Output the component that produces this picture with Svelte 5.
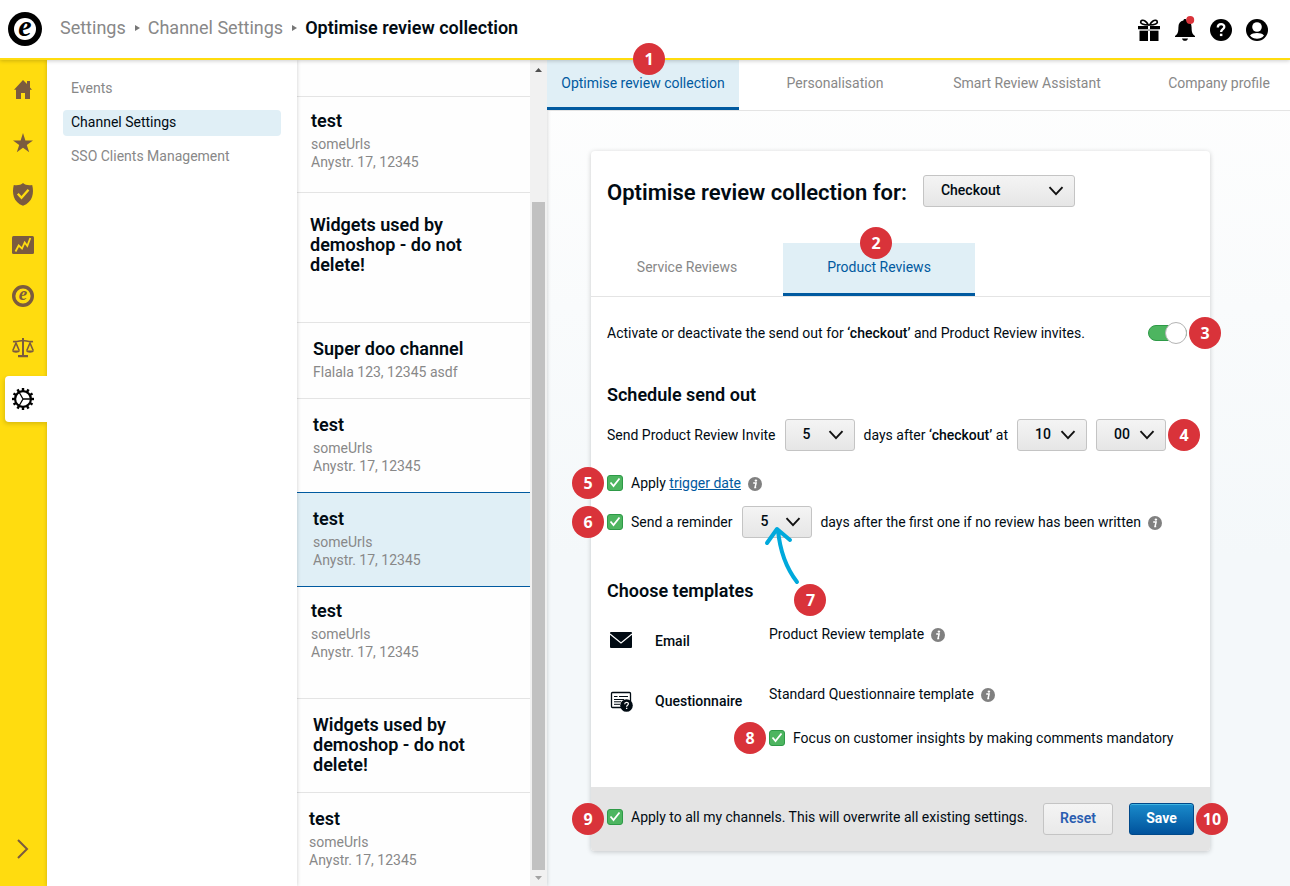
<script>
    const subNav = ['Events', 'Channel Settings', 'SSO Clients Management'];
    const tabs = ['Optimise review collection', 'Personalisation', 'Smart Review Assistant', 'Company profile'];
    const reviewTabs = ['Service Reviews', 'Product Reviews'];
    const channels = [
        { name: 'test', lines: ['someUrls', 'Anystr. 17, 12345'], layout: 'tight' },
        { name: 'Widgets used by demoshop - do not delete!', lines: [], layout: 'roomy' },
        { name: 'Super doo channel', lines: ['Flalala 123, 12345 asdf'], layout: '' },
        { name: 'test', lines: ['someUrls', 'Anystr. 17, 12345'], layout: '' },
        { name: 'test', lines: ['someUrls', 'Anystr. 17, 12345'], layout: '' },
        { name: 'test', lines: ['someUrls', 'Anystr. 17, 12345'], layout: 'tight tall' },
        { name: 'Widgets used by demoshop - do not delete!', lines: [], layout: '' },
        { name: 'test', lines: ['someUrls', 'Anystr. 17, 12345'], layout: 'last' },
    ];

    let activeNav = 1;
    let activeTab = 0;
    let activeReviewTab = 1;
    let activeChannel = 4;

    let event = 'Checkout';
    let sendOut = true;
    let inviteDays = '5';
    let hour = '10';
    let minute = '00';
    let triggerDate = true;
    let reminder = true;
    let reminderDays = '5';
    let mandatory = true;
    let allChannels = true;

    const teeth = [0, 30, 60, 90, 120, 150, 180, 210, 240, 270, 300, 330];
</script>

{#snippet chevron()}
    <svg class="chevron" viewBox="0 0 16 10" aria-hidden="true">
        <path d="M1.5 1.2 8 8.2l6.5-7" fill="none" stroke="#111" stroke-width="1.9" />
    </svg>
{/snippet}

{#snippet info()}
    <svg class="info" viewBox="0 0 14 14" role="img" aria-label="Info">
        <circle cx="7" cy="7" r="7" fill="#808080" />
        <circle cx="7.9" cy="3.6" r="1.2" fill="#fff" />
        <path d="M5.2 6.1h2.9L7 10.6h1.2" fill="none" stroke="#fff" stroke-width="1.5" />
    </svg>
{/snippet}

<div class="page">
    <header>
        <a class="logo" href="#home" aria-label="Home">
            <svg viewBox="0 0 34 34">
                <circle cx="17" cy="17" r="17" />
                <circle cx="17" cy="17" r="11" fill="#fff" />
                <text x="17" y="24" text-anchor="middle" font-size="30">e</text>
            </svg>
        </a>
        <nav class="breadcrumb">
            <a href="#settings">Settings</a>
            <svg viewBox="0 0 4 6"><path d="M0 0 5 3 0 6z" fill="#777" /></svg>
            <a href="#channels">Channel Settings</a>
            <svg viewBox="0 0 4 6"><path d="M0 0 5 3 0 6z" fill="#777" /></svg>
            <strong>Optimise review collection</strong>
        </nav>
        <div class="actions">
            <button aria-label="Gifts">
                <svg viewBox="0 0 22 22">
                    <path d="M0 7h10v3.2H0zM12 7h10v3.2H12zM1.5 12H10v10H1.500zM12 12h8.500v10H12z" />
                    <path d="M1.500 10.200h19V12h-19z" fill="#aaa" />
                    <path d="M10.300 6C7.500 5.800 3 5.500 2.700 3.300 2.500 1.300 5 .6 7 2c1.500 1 2.800 2.500 3.300 4zM11.700 6c2.800-.2 7.300-.5 7.600-2.700C19.500 1.300 17 .6 15 2c-1.500 1-2.800 2.500-3.300 4z" fill="none" stroke="#000" stroke-width="1.700" />
                </svg>
            </button>
            <button aria-label="Notifications">
                <svg viewBox="0 0 22 22">
                    <path d="M11 0c1 0 1.600.7 1.600 1.600 3.300.7 5 3.300 5 6.800 0 4.600.7 6.600 3.400 8.600v1H1v-1c2.700-2 3.400-4 3.400-8.600 0-3.500 1.700-6.100 5-6.800C9.400.7 10 0 11 0zM8 19.500h6c-.4 1.400-1.400 2.300-3 2.300s-2.600-.9-3-2.300z" />
                    <circle cx="16.200" cy="1" r="4" fill="#d9333a" />
                </svg>
            </button>
            <button aria-label="Help">
                <svg viewBox="0 0 22 22">
                    <circle cx="11" cy="11" r="11" />
                    <path d="M7.800 8.600c0-4.500 6.700-4.300 6.500-.6-.1 2.200-3.200 2.300-3.200 5.100" fill="none" stroke="#fff" stroke-width="2.300" />
                    <path d="M9.900 14.700h2.500v2.400H9.900z" fill="#fff" />
                </svg>
            </button>
            <button aria-label="Account">
                <svg viewBox="0 0 22 22">
                    <circle cx="11" cy="11" r="11" />
                    <circle cx="11" cy="8" r="4.800" fill="#fff" />
                    <path d="M4 16.500c1.500-2 4.200-2.600 7-2.600s5.500.6 7 2.600c-1.800 2.200-4.200 3.300-7 3.300s-5.200-1.100-7-3.300z" fill="#fff" />
                </svg>
            </button>
        </div>
    </header>

    <div class="columns">
        <nav class="rail" aria-label="Main">
            <a href="#home" aria-label="Home">
                <svg viewBox="0 0 24 24"><path d="M12 -1 3 8.700h2V18h5v-6h4v6h5V8.700h2l-2-2.300V0h-3v3z" /></svg>
            </a>
            <a href="#reviews" aria-label="Reviews">
                <svg viewBox="0 0 24 24"><path d="m12 1 2.400 7.400H22l-6.200 4.500 2.400 7.400-6.200-4.600-6.200 4.600 2.400-7.400L2 8.400h7.600z" /></svg>
            </a>
            <a href="#protection" aria-label="Protection">
                <svg viewBox="0 0 24 24">
                    <path d="M12 0c2 2.100 6 2.600 9.200 2 2 8 .7 17-9.200 20.800C2.100 19 .8 10 2.800 2 6 2.600 10 2.100 12 0z" />
                    <path d="m6.800 10.800 3.700 4 7-8" fill="none" stroke="#ffdc0f" stroke-width="2.400" />
                </svg>
            </a>
            <a href="#insights" aria-label="Insights">
                <svg viewBox="0 0 24 24">
                    <rect x="1" y="2" width="22" height="18" rx="1.500" />
                    <path d="m4.500 17.500 3.200-6 3.300 3 2.700-6 2.600 3.500 3-8" fill="none" stroke="#ffdc0f" stroke-width="1.800" />
                </svg>
            </a>
            <a href="#trustmark" aria-label="Trustmark">
                <svg viewBox="0 0 24 24">
                    <circle cx="12" cy="11" r="9.300" fill="none" stroke="#7b5b3f" stroke-width="3.400" />
                    <text x="12" y="15" text-anchor="middle" font-size="19">e</text>
                </svg>
            </a>
            <a href="#legal" aria-label="Legal">
                <svg viewBox="0 0 24 24">
                    <path d="M11 2h2v17h4v2.300H7V19h4zM1 14.500h8c-.3 3-7.700 3-8 0zM15 14.500h8c-.3 3-7.700 3-8 0z" />
                    <path d="M2 5.500c4 .8 7-1 10-1s6 1.800 10 1M1.800 14.500 5 7l3.200 7.500M15.800 14.500 19 7l3.200 7.500" fill="none" stroke="#7b5b3f" stroke-width="1.600" />
                </svg>
            </a>
            <a class="active" href="#settings" aria-label="Settings">
                <svg viewBox="0 0 24 24">
                    {#each teeth as angle}
                        <path d="M10.800 1h2.400v3h-2.400z" transform="rotate({angle} 12 12)" />
                    {/each}
                    <circle cx="12" cy="12" r="7.900" fill="none" stroke="#000" stroke-width="2.200" />
                    <path d="M12 12h8M12 12 8 5M12 12l-4 7" fill="none" stroke="#000" stroke-width="1.300" />
                </svg>
            </a>
            <button class="expand" aria-label="Expand menu">
                <svg viewBox="0 0 24 24"><path d="m7 3 9 9-9 9" fill="none" stroke="#7b5b3f" stroke-width="2" /></svg>
            </button>
        </nav>

        <nav class="subnav" aria-label="Settings">
            {#each subNav as item, i}
                <a href="#settings" class:active={i === activeNav} on:click={() => (activeNav = i)}>{item}</a>
            {/each}
        </nav>

        <div class="channels">
            <ul>
                <li class="stub"></li>
                {#each channels as channel, i}
                    <li class={channel.layout} class:selected={i === activeChannel}>
                        <button on:click={() => (activeChannel = i)}>
                            <strong>{channel.name}</strong>
                            {#each channel.lines as line}
                                <span>{line}</span>
                            {/each}
                        </button>
                    </li>
                {/each}
            </ul>
            <div class="scrollbar" aria-hidden="true">
                <svg viewBox="0 0 7 4"><path d="M0 4h7L3.500 0z" fill="#505050" /></svg>
                <div class="thumb"></div>
                <svg viewBox="0 0 7 4"><path d="M0 0h7L3.500 4z" fill="#a3a3a3" /></svg>
            </div>
        </div>

        <main>
            <div class="anchor">
                <div class="tabs">
                    {#each tabs as tab, i}
                        <button class:active={i === activeTab} on:click={() => (activeTab = i)}>{tab}</button>
                    {/each}
                </div>
                <span class="badge on-tab">1</span>
            </div>

            <section class="card">
                <div class="title">
                    <h1><label for="event">Optimise review collection for:</label></h1>
                    <div class="select wide">
                        <select id="event" bind:value={event}>
                            <option>Checkout</option>
                        </select>
                        {@render chevron()}
                    </div>
                </div>

                <div class="review-tabs">
                    {#each reviewTabs as tab, i}
                        <button class:active={i === activeReviewTab} on:click={() => (activeReviewTab = i)}>
                            {tab}
                            {#if i === 1}<span class="badge on-top">2</span>{/if}
                        </button>
                    {/each}
                </div>

                <div class="content">
                    <div class="row activate">
                        <label for="send-out">Activate or deactivate the send out for <b>‘checkout’</b> and Product Review invites.</label>
                        <div class="anchor">
                            <input id="send-out" class="toggle" type="checkbox" bind:checked={sendOut} />
                            <span class="badge after">3</span>
                        </div>
                    </div>

                    <h2>Schedule send out</h2>
                    <div class="row schedule">
                        <label for="days">Send Product Review Invite</label>
                        <div class="select">
                            <select id="days" bind:value={inviteDays}><option>5</option></select>
                            {@render chevron()}
                        </div>
                        <label for="hour">days after <b>‘checkout’</b> at</label>
                        <div class="select">
                            <select id="hour" bind:value={hour}><option>10</option></select>
                            {@render chevron()}
                        </div>
                        <div class="select">
                            <select aria-label="Minute" bind:value={minute}><option>00</option></select>
                            {@render chevron()}
                            <span class="badge after">4</span>
                        </div>
                    </div>

                    <div class="row check trigger">
                        <span class="badge before">5</span>
                        <input id="trigger" class="box" type="checkbox" bind:checked={triggerDate} />
                        <label for="trigger">Apply <a href="#trigger-date">trigger date</a></label>
                        {@render info()}
                    </div>

                    <div class="row check reminder">
                        <span class="badge before">6</span>
                        <input id="reminder" class="box" type="checkbox" bind:checked={reminder} />
                        <label for="reminder">Send a reminder</label>
                        <div class="select">
                            <select id="reminder-days" bind:value={reminderDays}><option>5</option></select>
                            {@render chevron()}
                            <svg class="arrow" viewBox="0 0 40 64" aria-hidden="true">
                                <path d="M35 58C25 45 18 28 16 6M5 19 15 5l13 11" />
                            </svg>
                            <span class="badge below">7</span>
                        </div>
                        <label for="reminder-days">days after the first one if no review has been written</label>
                        {@render info()}
                    </div>

                    <h2>Choose templates</h2>
                    <dl>
                        <dt>
                            <svg viewBox="0 0 24 24">
                                <rect x="1" y="3" width="22" height="16" rx="1" fill="#010b13" />
                                <path d="m1 5 11 9 11-9" fill="none" stroke="#fff" stroke-width="1.200" />
                            </svg>
                            Email
                        </dt>
                        <dd>
                            <div class="row">Product Review template {@render info()}</div>
                        </dd>
                        <dt>
                            <svg viewBox="0 0 24 24">
                                <rect x="2.500" y="3.500" width="19" height="15" rx="1" fill="none" stroke="#010b13" stroke-width="1.300" />
                                <path d="M5 7.500h3.500M10 7.500h9M5 10.500h10M5 12.800h7M5 15.300h6" stroke="#010b13" stroke-width="1" />
                                <circle cx="17.500" cy="16.500" r="6.300" fill="#010b13" />
                                <path d="M15.700 15.300c0-2.600 3.800-2.500 3.700-.3-.1 1.200-1.800 1.300-1.800 2.800" fill="none" stroke="#fff" stroke-width="1.200" />
                                <path d="M17 18.700h1.300V20H17z" fill="#fff" />
                            </svg>
                            Questionnaire
                        </dt>
                        <dd>
                            <div class="row">Standard Questionnaire template {@render info()}</div>
                            <div class="row check mandatory">
                                <span class="badge before">8</span>
                                <input id="mandatory" class="box" type="checkbox" bind:checked={mandatory} />
                                <label for="mandatory">Focus on customer insights by making comments mandatory</label>
                            </div>
                        </dd>
                    </dl>
                </div>

                <footer>
                    <div class="row check">
                        <span class="badge before">9</span>
                        <input id="all" class="box" type="checkbox" bind:checked={allChannels} />
                        <label for="all">Apply to all my channels. This will overwrite all existing settings.</label>
                    </div>
                    <button class="reset">Reset</button>
                    <div class="anchor">
                        <button class="save">Save</button>
                        <span class="badge after">10</span>
                    </div>
                </footer>
            </section>
        </main>
    </div>
</div>

<style>
    :global(body) {
        margin: 0;
        font-family: Roboto, sans-serif;
        font-size: 14px;
        line-height: 20px;
        color: #010b13;
    }
    .page,
    .page :global(*) {
        box-sizing: border-box;
    }
    .page {
        display: flex;
        flex-direction: column;
        min-height: 100vh;
    }
    svg {
        display: block;
        flex: none;
        overflow: visible;
    }
    text {
        font-family: "Liberation Serif", serif;
        font-style: italic;
        font-weight: bold;
    }
    button {
        border: 0;
        padding: 0;
        background: none;
        color: inherit;
        font: inherit;
        cursor: pointer;
    }
    a {
        color: inherit;
        text-decoration: none;
    }
    ul,
    dl,
    dd,
    h1,
    h2 {
        margin: 0;
        padding: 0;
    }
    b,
    strong {
        font-weight: 500;
    }

    header {
        position: relative;
        z-index: 3;
        display: flex;
        align-items: center;
        height: 60px;
        padding: 0 22px 0 8px;
        background: #fff;
        border-bottom: 2px solid #ffdc0f;
        box-shadow: 0 1px 4px rgba(0, 0, 0, 0.2);
    }
    .logo svg {
        width: 34px;
        height: 34px;
    }
    .breadcrumb {
        display: flex;
        align-items: center;
        gap: 9px;
        margin-left: 18px;
        padding-bottom: 2px;
        font-size: 18px;
        color: #888;
    }
    .breadcrumb svg {
        width: 4px;
        height: 6px;
    }
    .breadcrumb strong {
        font-weight: 600;
        color: #010b13;
    }
    .actions {
        display: flex;
        gap: 14px;
        margin-left: auto;
        padding-top: 2px;
    }
    .actions svg {
        width: 22px;
        height: 22px;
    }

    .columns {
        flex: 1;
        display: grid;
        grid-template-columns: 47px 250px 250px minmax(0, 1fr);
    }
    .rail {
        display: flex;
        flex-direction: column;
        gap: 5px;
        padding: 10px 0 14px 5px;
        background: #ffdc0f;
        fill: #7b5b3f;
    }
    .rail a,
    .rail button {
        display: flex;
        align-items: center;
        height: 46px;
        padding-left: 6px;
    }
    .rail svg {
        width: 24px;
        height: 24px;
    }
    .rail .active {
        position: relative;
        z-index: 2;
        background: #fff;
        border-radius: 4px 0 0 4px;
        box-shadow: -1px 2px 4px rgba(0, 0, 0, 0.15);
        clip-path: inset(-6px 0 -6px -6px);
        fill: #000;
    }
    .rail .expand {
        margin-top: auto;
    }

    .subnav {
        position: relative;
        z-index: 1;
        display: flex;
        flex-direction: column;
        gap: 8px;
        padding: 16px;
        background: #fff;
        box-shadow: 0 0 4px rgba(0, 0, 0, 0.2);
        color: #888;
    }
    .subnav a {
        padding: 2px 8px 4px;
        border-radius: 4px;
    }
    .subnav .active {
        background: #e0eff6;
        color: #010b13;
    }

    .channels {
        position: relative;
        display: flex;
        background: #fefefe;
        box-shadow: 0 0 4px rgba(0, 0, 0, 0.2);
    }
    ul {
        flex: 1;
        list-style: none;
    }
    li {
        padding: 16px 48px 17px 16px;
        border-bottom: 1px solid #e4e4e4;
    }
    li.stub {
        height: 37px;
        padding: 0;
    }
    li.tight {
        min-height: 96px;
        padding: 14px 48px 0 14px;
    }
    li.tall {
        min-height: 112px;
    }
    li.roomy {
        min-height: 130px;
        padding: 22px 48px 0 13px;
    }
    li.last {
        padding: 16px 48px 0 12px;
        border: 0;
    }
    li.selected {
        position: relative;
        margin-top: -1px;
        background: #e0eff6;
        border-top: 1px solid #005aa0;
        border-bottom-color: #005aa0;
    }
    li button {
        display: block;
        text-align: left;
    }
    li strong {
        display: block;
        font-size: 18px;
        font-weight: 600;
    }
    li span {
        display: block;
        line-height: 18px;
        color: #888;
    }
    li strong + span {
        margin-top: 4px;
    }
    .scrollbar {
        display: flex;
        flex-direction: column;
        align-items: center;
        width: 17px;
        padding: 8px 0 6px;
        background: #f1f1f1;
    }
    .scrollbar svg {
        width: 7px;
        height: 4px;
    }
    .thumb {
        flex: 1;
        width: 13px;
        margin: 130px 0 6px;
        background: #c1c1c1;
    }

    main {
        background: linear-gradient(#fefefe, #f4f8fa 60%);
    }
    .tabs {
        flex: 1;
        display: flex;
        min-width: 0;
        background: #fff;
        border-bottom: 1px solid #e4e4e4;
        overflow: hidden;
    }
    .tabs button,
    .review-tabs button {
        flex: none;
        width: 192px;
        height: 50px;
        padding-bottom: 2px;
        border-bottom: 3px solid transparent;
        color: #888;
    }
    .tabs button.active,
    .review-tabs button.active {
        background: #e0eff6;
        border-color: #005aa0;
        color: #005aa0;
    }

    .card {
        margin: 40px 80px 34px 44px;
        background: #fff;
        border-radius: 4px;
        box-shadow: 0 1px 5px rgba(0, 0, 0, 0.2);
    }
    .title {
        display: flex;
        align-items: center;
        gap: 16px;
        padding: 24px 16px 36px;
    }
    h1 {
        padding-top: 3px;
        font-size: 22px;
        line-height: 28px;
        font-weight: 600;
    }
    h2 {
        font-size: 18px;
        line-height: 24px;
        font-weight: 600;
    }
    .review-tabs {
        display: flex;
        border-bottom: 1px solid #e4e4e4;
    }
    .review-tabs button {
        position: relative;
        height: 53px;
    }
    .content {
        padding: 26px 23px 39px 16px;
    }
    .row {
        position: relative;
        display: flex;
        align-items: center;
    }
    .activate {
        justify-content: space-between;
        margin-bottom: 40px;
    }
    .anchor {
        position: relative;
        display: flex;
    }
    .schedule {
        gap: 9px;
        margin: 12px 0 22px;
    }
    .check .box {
        margin-right: 8px;
    }
    .reminder {
        margin: 13px 0 41px;
    }
    .reminder .select {
        margin: 0 8px 0 10px;
    }
    .row a {
        color: #005aa0;
        text-decoration: underline;
    }
    .info {
        width: 14px;
        height: 14px;
        margin: 2px 0 0 7px;
    }

    .select {
        position: relative;
        width: 70px;
    }
    .select.wide {
        width: 152px;
    }
    select {
        appearance: none;
        display: block;
        width: 100%;
        height: 32px;
        margin: 0;
        padding: 0 28px 2px 17px;
        border: 1px solid #c4c4c4;
        border-radius: 3px;
        background: linear-gradient(#f4f4f4, #e6e6e6);
        color: #010b13;
        font: 500 14px/20px Roboto, sans-serif;
    }
    .chevron {
        position: absolute;
        top: 11px;
        right: 11px;
        width: 16px;
        height: 10px;
        pointer-events: none;
    }
    .arrow {
        position: absolute;
        top: 18px;
        left: 20px;
        width: 40px;
        height: 64px;
        fill: none;
        stroke: #00a9dc;
        stroke-width: 4px;
        stroke-linecap: round;
        stroke-linejoin: round;
        pointer-events: none;
    }

    .box {
        appearance: none;
        flex: none;
        width: 16px;
        height: 16px;
        margin: 0;
        border: 1px solid #2e9a47;
        border-radius: 3px;
        background: #fff;
    }
    .box:checked {
        background: #4db560 url("data:image/svg+xml,%3Csvg xmlns='http://www.w3.org/2000/svg' viewBox='0 0 14 14'%3E%3Cpath d='M2.500 6.500l3 3.500 6-7.500' fill='none' stroke='white' stroke-width='1.800'/%3E%3C/svg%3E");
    }
    .toggle {
        appearance: none;
        position: relative;
        width: 39px;
        height: 16px;
        margin: 0;
        border: 1px solid #999;
        border-radius: 8px;
        background: #ccc;
    }
    .toggle:checked {
        background: #4db560;
        border-color: #2e9a47;
    }
    .toggle::after {
        content: "";
        position: absolute;
        top: -4px;
        left: -1px;
        width: 22px;
        height: 22px;
        border: 1px solid #b4b4b4;
        border-radius: 50%;
        background: #fff;
        box-sizing: border-box;
    }
    .toggle:checked::after {
        left: 16px;
    }

    dl {
        display: grid;
        grid-template-columns: 162px 1fr;
        row-gap: 33px;
        margin-top: 21px;
    }
    dt {
        display: flex;
        align-items: center;
        gap: 22px;
        height: 20px;
        margin: 7px 0 0 2px;
        font-weight: 500;
        white-space: nowrap;
    }
    dt svg {
        width: 24px;
        height: 24px;
    }
    .mandatory {
        margin-top: 24px;
    }

    footer {
        display: flex;
        align-items: center;
        height: 64px;
        padding: 0 16px;
        background: #e4e4e4;
        border-radius: 0 0 4px 4px;
    }
    footer .check {
        margin-right: auto;
        padding-bottom: 4px;
    }
    .reset,
    .save {
        width: 70px;
        height: 32px;
        padding-bottom: 2px;
        border: 1px solid #c4c4c4;
        border-radius: 3px;
        background: linear-gradient(#f4f4f4, #e9e9e9);
        color: #2a5db0;
        font-weight: 600;
    }
    .save {
        width: 65px;
        margin-left: 16px;
        border-color: #00498a;
        background: linear-gradient(#1a8bcb, #00529c);
        box-shadow: inset 0 1px 0 #3fb4e0;
        color: #fff;
        font-weight: 700;
    }

    .badge {
        position: absolute;
        z-index: 4;
        width: 32px;
        height: 32px;
        border-radius: 50%;
        background: #d9333a;
        color: #fff;
        font: bold 16px/32px "Open Sans", sans-serif;
        text-align: center;
    }
    .badge.on-tab {
        top: -17px;
        left: 86px;
    }
    .badge.on-top {
        top: -16px;
        left: 77px;
    }
    .badge.before {
        top: 50%;
        left: -35px;
        margin-top: -16px;
    }
    .badge.after {
        top: 50%;
        left: 100%;
        margin: -16px 0 0 2px;
    }
    .badge.below {
        top: 78px;
        left: 52px;
    }
</style>
